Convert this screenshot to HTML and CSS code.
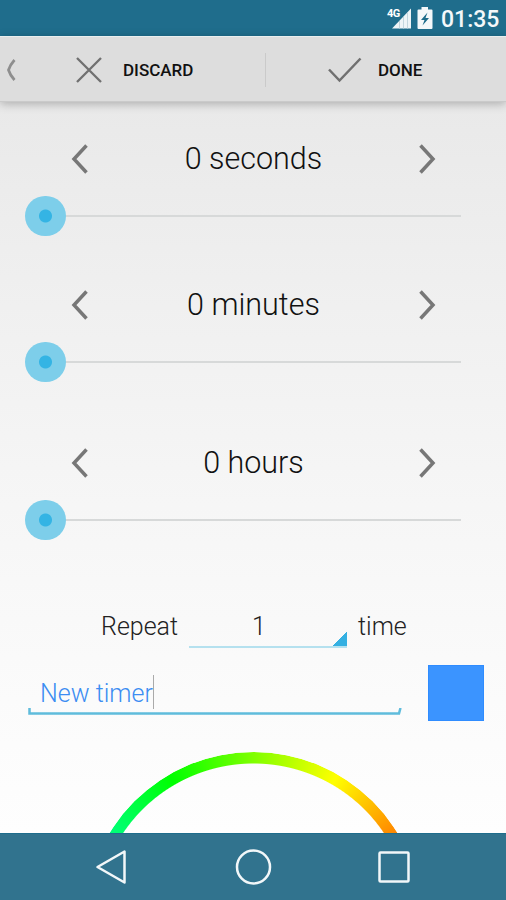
FILE: index.html
```html
<!DOCTYPE html>
<html lang="en">
<head>
<meta charset="utf-8">
<title>New timer</title>
<link rel="stylesheet" href="styles.css">
</head>
<body>
<div class="screen">
  <header class="status">
    <svg class="signal" width="28" height="24" viewBox="0 0 28 24">
      <path d="M7 22.500 26 2.500V22.500Z" fill="#eef4f7"/>
      <path d="M14.500 15V22.500M18.500 11V22.500M22.500 7V22.500" stroke="#c3d6de" stroke-width="1"/>
      <text x="2" y="11" class="network">4G</text>
    </svg>
    <svg class="battery" width="16" height="22" viewBox="0 0 16 22">
      <path d="M4.500 0h6.500v2.500h3.500q1 0 1 1V21q0 1-1 1H1.500q-1 0-1-1V3.500q0-1 1-1h3Z" fill="#f4f8fa"/>
      <path d="M10.500 5.500 4 13h3.500L5.500 18.500 12 11H8.500Z" fill="#1d6c8b"/>
    </svg>
    <span class="clock">01:35</span>
  </header>
  <nav class="actions">
    <svg class="back" width="12" height="22" viewBox="0 0 12 22"><path d="M10.500 1Q6 6 4.500 11 6 16 10.500 21" fill="none" stroke="#8e8e8e" stroke-width="2.700"/></svg>
    <button class="action discard">
      <svg width="26" height="26" viewBox="0 0 26 26"><path d="M1 1 25 25M25 1 1 25" stroke="#707070" stroke-width="2.300"/></svg>
      <span>DISCARD</span>
    </button>
    <i class="divider"></i>
    <button class="action done">
      <svg width="34" height="26" viewBox="0 0 34 26"><path d="M1 12.500 11.500 23.500 32.500 1.500" fill="none" stroke="#707070" stroke-width="2.500"/></svg>
      <span>DONE</span>
    </button>
  </nav>
  <main class="content">
    <section class="picker">
      <div class="value">
        <svg width="17" height="30" viewBox="0 0 17 30"><path d="M15.500 1.500 3 15 15.500 28.500" /></svg>
        <span>0 seconds</span>
        <svg width="17" height="30" viewBox="0 0 17 30"><path d="M1.500 1.500 14 15 1.500 28.500" /></svg>
      </div>
      <div class="slider"><i class="thumb"></i></div>
    </section>
    <section class="picker">
      <div class="value">
        <svg width="17" height="30" viewBox="0 0 17 30"><path d="M15.500 1.500 3 15 15.500 28.500" /></svg>
        <span>0 minutes</span>
        <svg width="17" height="30" viewBox="0 0 17 30"><path d="M1.500 1.500 14 15 1.500 28.500" /></svg>
      </div>
      <div class="slider"><i class="thumb"></i></div>
    </section>
    <section class="picker hours">
      <div class="value">
        <svg width="17" height="30" viewBox="0 0 17 30"><path d="M15.500 1.500 3 15 15.500 28.500" /></svg>
        <span>0 hours</span>
        <svg width="17" height="30" viewBox="0 0 17 30"><path d="M1.500 1.500 14 15 1.500 28.500" /></svg>
      </div>
      <div class="slider"><i class="thumb"></i></div>
    </section>
    <div class="repeat">
      <span class="repeat-label">Repeat</span>
      <div class="spinner"><span>1</span></div>
      <span class="repeat-unit">time</span>
    </div>
    <div class="naming">
      <div class="field">
        <span class="name">New timer</span><i class="caret"></i>
        <svg class="underline" width="374" height="8" viewBox="0 0 374 8"><path d="M1.500 0V5.500H371L372.500 0" fill="none" stroke="#5fbcdc" stroke-width="2.500"/></svg>
      </div>
      <div class="swatch"></div>
    </div>
    <div class="wheel"></div>
  </main>
  <footer class="navbar">
    <svg width="34" height="38" viewBox="0 0 34 38"><path d="M3.500 19 30.500 3.500V34.500Z" /></svg>
    <svg width="38" height="38" viewBox="0 0 38 38"><circle cx="19.500" cy="19" r="16.500"/></svg>
    <svg width="34" height="38" viewBox="0 0 34 38"><rect x="2.500" y="4.500" width="29" height="29" rx="1"/></svg>
  </footer>
</div>
</body>
</html>
```

FILE: styles.css
```css
* { box-sizing: border-box; }
body { margin: 0; font-family: Roboto, "Liberation Sans", sans-serif; }
.screen {
  width: 506px;
  height: 900px;
  display: flex;
  flex-direction: column;
  overflow: hidden;
}
.status {
  flex: none;
  height: 36px;
  padding: 0 8px 0 0;
  display: flex;
  align-items: center;
  justify-content: flex-end;
  background: #1f6d8c;
  color: #f4f8fa;
}
.signal { margin: 0 4px 0 0; }
.network { font-size: 11px; font-weight: 700; fill: #fff; stroke: #1f6d8c; stroke-width: 1.5px; paint-order: stroke; letter-spacing: -0.5px; }
.battery { margin-right: 8px; }
.clock { font-size: 23px; line-height: 34px; font-weight: 500; width: 57px; padding-top: 3px; white-space: nowrap; }
.actions {
  flex: none;
  height: 66px;
  padding-top: 1px;
  display: flex;
  align-items: center;
  background: #dddddd;
  border-top: 1px solid #e9eeee;
  border-bottom: 1px solid #cacaca;
  box-shadow: 0 2px 9px rgba(0, 0, 0, 0.26);
  z-index: 1;
}
.back { margin: 0 60px 0 4px; }
.action {
  display: flex;
  align-items: center;
  padding: 0;
  border: 0;
  background: none;
  color: #111;
  font: 500 17px Roboto, "Liberation Sans", sans-serif;
}
.discard { width: 189px; gap: 21px; }
.done { gap: 16px; margin-left: 62px; }
.divider { width: 1px; height: 34px; background: #cacaca; }
.content {
  flex: 1;
  min-height: 0;
  overflow: hidden;
  padding-top: 29px;
  background: linear-gradient(#e9e9e9, #f0f0f0 28%, #f5f5f5 50%, #fafafa 76%, #fefefe);
}
.picker { height: 146px; }
.hours { margin-top: 12px; }
.value {
  height: 56px;
  padding: 0 70px 0 71px;
  display: flex;
  align-items: center;
  justify-content: space-between;
  font-size: 30.5px;
  font-weight: 300;
  color: #111;
}
.value span { padding-bottom: 1px; }
.value path { fill: none; stroke: #777; stroke-width: 3.5; }
.slider {
  height: 40px;
  margin: 9px 45px 0 25px;
  display: flex;
  align-items: center;
  background: linear-gradient(#d7d9d9, #d7d9d9) 20px 19px / 100% 2px no-repeat;
}
.thumb {
  width: 40.5px;
  height: 40.5px;
  border-radius: 50%;
  background: radial-gradient(circle, #34b4e4 6px, #7dceea 7px);
}
.repeat {
  height: 41px;
  margin-top: 26px;
  padding-left: 101px;
  display: flex;
  align-items: center;
  font-size: 25px;
  font-weight: 300;
  color: #222;
}
.repeat-label, .repeat-unit { padding-bottom: 2px; }
.repeat-label { width: 88px; }
.spinner {
  width: 158px;
  height: 41px;
  margin-right: 11px;
  padding-right: 18px;
  display: flex;
  align-items: center;
  justify-content: center;
  border-bottom: 2px solid #b5e1ef;
  background: linear-gradient(135deg, transparent 50%, #34b0e2 51%) right bottom / 17px 17px no-repeat;
  background-origin: border-box;
  background-clip: border-box;
}
.naming {
  height: 56px;
  margin-top: 17px;
  padding: 0 22px 0 28px;
  display: flex;
  justify-content: space-between;
}
.field {
  width: 374px;
  height: 51px;
  display: grid;
  grid-template-columns: max-content 2px 1fr;
  grid-template-rows: 43px 8px;
  align-items: center;
  padding-left: 12px;
}
.name { font-size: 25px; font-weight: 300; color: #3c8df2; padding-top: 13px; white-space: nowrap; }
.caret { width: 1px; height: 34px; background: #aaa; margin-top: 11px; }
.underline { grid-column: 1 / -1; margin-left: -12px; }
.swatch { width: 56px; height: 56px; background: #3b94ff; border: 1px solid #2f8cff; }
.wheel {
  width: 337px;
  height: 337px;
  margin: 31px 0 0 85px;
  border-radius: 50%;
  background: conic-gradient(from 90deg, #f00, #f0f, #00f, #0ff, #0f0, #ff0, #f00);
  -webkit-mask: radial-gradient(circle, transparent 156.500px, #000 157.500px);
  mask: radial-gradient(circle, transparent 156.500px, #000 157.500px);
}
.navbar {
  flex: none;
  height: 67px;
  padding: 0 95px 0 94px;
  display: flex;
  align-items: center;
  justify-content: space-between;
  background: #31738e;
  border-top: 1px solid #1f6d8c;
}
.navbar svg * { fill: none; stroke: #f2f7f9; stroke-width: 2.5; stroke-linejoin: round; }
```
